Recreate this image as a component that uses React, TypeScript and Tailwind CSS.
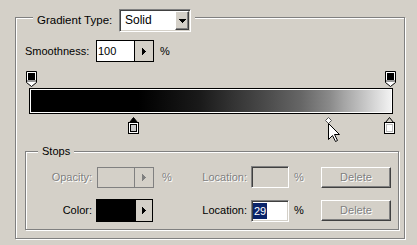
import React from 'react';

const etched = 'border border-[#808080] shadow-[inset_1px_1px_0_#fff,1px_1px_0_#fff]';
const sunken =
  'border border-t-[#808080] border-l-[#808080] border-b-white border-r-white shadow-[inset_1px_1px_0_#404040,inset_-1px_-1px_0_#d4d0c8]';
const raised =
  'border border-t-white border-l-white border-b-[#404040] border-r-[#404040] shadow-[inset_-1px_-1px_0_#808080]';
const dimText = 'text-[#808080] [text-shadow:1px_1px_0_#fff]';

function RightArrow({ color = '#000' }: { color?: string }) {
  return (
    <svg width="4" height="7" viewBox="0 0 4 7" shapeRendering="crispEdges">
      <path d="M0 0H1V7H0Z M1 1H2V6H1Z M2 2H3V5H2Z M3 3H4V4H3Z" fill={color} />
    </svg>
  );
}

function DownArrow() {
  return (
    <svg width="7" height="4" viewBox="0 0 7 4" shapeRendering="crispEdges">
      <path d="M0 0H7V1H0Z M1 1H6V2H1Z M2 2H5V3H2Z M3 3H4V4H3Z" fill="#000" />
    </svg>
  );
}

function OpacityStop({ className }: { className: string }) {
  return (
    <svg className={className} width="11" height="16" viewBox="0 0 11 16">
      <path d="M0.5 0.5H10.5V11.5L5.5 15.5L0.5 11.5Z" fill="#fff" stroke="#000" />
      <rect x="2" y="2" width="7" height="7" fill="#000" />
      <rect x="1" y="9" width="9" height="2" fill="#9a9a9a" />
    </svg>
  );
}

function ColorStop({ className, selected, fill }: { className: string; selected?: boolean; fill: string }) {
  return (
    <svg className={className} width="11" height="17" viewBox="0 0 11 17">
      <path d="M5.5 0.5L9.5 5.5H1.5Z" fill={selected ? '#000' : '#d4d0c8'} stroke="#000" />
      <rect x="0.5" y="5.5" width="10" height="11" fill="#fff" stroke="#000" />
      <rect x="2.5" y="7.5" width="6" height="7" fill={fill} stroke={selected ? '#000' : '#bdbdbd'} />
    </svg>
  );
}

function DeleteButton() {
  return (
    <div className={`${raised} w-[70px] h-[21px] flex items-center justify-center bg-[#d4d0c8] ${dimText}`}>
      Delete
    </div>
  );
}

export default function App() {
  return (
    <div className="w-[417px] h-[245px] overflow-hidden bg-[#d4d0c8] pt-[17px] pl-[15px] font-['Liberation_Sans',sans-serif] text-[11px] leading-[13px] text-black">
      <div className={`${etched} relative w-[390px] h-[222px]`}>
        {/* Group legend: Gradient Type */}
        <div className="absolute left-[17px] top-[-9px] flex items-center bg-[#d4d0c8] px-[4px]">
          <span className="w-[82px] text-[11.5px]">Gradient Type:</span>
          <div className={`${sunken} w-[72px] h-[23px] bg-white flex items-center justify-between`}>
            <span className="pl-[5px] text-[12px]">Solid</span>
            <div className={`${raised} mr-[1px] w-[14px] h-[19px] bg-[#d4d0c8] flex items-center justify-center`}>
              <DownArrow />
            </div>
          </div>
        </div>

        {/* Smoothness */}
        <div className="mt-[22px] ml-[9px] flex items-center h-[22px]">
          <span className="w-[71px]">Smoothness:</span>
          <div className="w-[58px] h-[22px] border border-black bg-white flex">
            <span className="w-[37px] pl-[1px] flex items-center">100</span>
            <div className="flex-1 border-l border-black bg-[#d4d0c8] flex items-center justify-center">
              <RightArrow />
            </div>
          </div>
          <span className="ml-[6px]">%</span>
        </div>

        {/* Gradient bar with stops */}
        <div className="relative ml-[10px] mt-[9px] pt-[17px] w-[370px] h-[64px]">
          <OpacityStop className="absolute left-0 top-0" />
          <OpacityStop className="absolute left-[359px] top-0" />
          <div className="ml-[3px] w-[364px] h-[26px] border border-black bg-white p-px">
            <div className="h-full bg-[linear-gradient(to_right,#000_0%,#000_30%,#1a1a1a_47%,#333_56%,#4a4a4a_65%,#666_75%,#8a8a8a_83%,#a5a5a5_87%,#c8c8c8_93%,#f2f2f2_100%)]" />
          </div>
          <ColorStop className="absolute left-[102px] top-[46px]" selected fill="#c8c8c8" />
          <ColorStop className="absolute left-[358px] top-[46px]" fill="#fff" />
          <svg className="absolute left-[299px] top-[46px]" width="7" height="7" viewBox="0 0 7 7">
            <path d="M3.5 0.5L6.5 3.5L3.5 6.5L0.5 3.5Z" fill="#fff" stroke="#555" />
          </svg>
          <svg className="absolute left-[302px] top-[52px]" width="13" height="20" viewBox="0 0 13 20">
            <path d="M0.5 0.5V16.5L4.5 12.5L7.5 18.5L9.5 17.5L6.5 11.5H11.5Z" fill="#fff" stroke="#000" />
          </svg>
        </div>

        {/* Stops group */}
        <div className={`${etched} relative ml-[9px] mt-[16px] w-[374px] h-[79px]`}>
          <span className="absolute left-[12px] top-[-7px] px-[4px] bg-[#d4d0c8]">Stops</span>

          <div className="mt-[14px] flex items-center h-[22px]">
            <span className={`w-[66px] text-right ${dimText}`}>Opacity:</span>
            <div className="ml-[5px] w-[57px] h-[21px] border border-[#808080] flex">
              <span className="w-[36px]" />
              <div className="flex-1 border-l border-[#808080] flex items-center justify-center">
                <RightArrow color="#808080" />
              </div>
            </div>
            <span className={`w-[43px] pl-[8px] ${dimText}`}>%</span>
            <span className={`w-[50px] text-right ${dimText}`}>Location:</span>
            <div className={`${sunken} ml-[4px] w-[38px] h-[22px] bg-[#d4d0c8]`} />
            <span className={`w-[32px] pl-[5px] ${dimText}`}>%</span>
            <DeleteButton />
          </div>

          <div className="mt-[11px] flex items-center h-[23px]">
            <span className="w-[66px] text-right">Color:</span>
            <div className="ml-[4px] w-[57px] h-[23px] border border-black flex">
              <span className="w-[38px] bg-black" />
              <div className="flex-1 border-l border-black bg-[#d4d0c8] flex items-center justify-center">
                <RightArrow />
              </div>
            </div>
            <span className="w-[44px]" />
            <span className="w-[50px] text-right">Location:</span>
            <div className={`${sunken} ml-[4px] w-[38px] h-[22px] bg-white flex items-center pl-[1px]`}>
              <span className="bg-[#0a246a] text-white px-[1px] leading-[16px]">29</span>
            </div>
            <span className="w-[32px] pl-[5px]">%</span>
            <DeleteButton />
          </div>
        </div>
      </div>
    </div>
  );
}
